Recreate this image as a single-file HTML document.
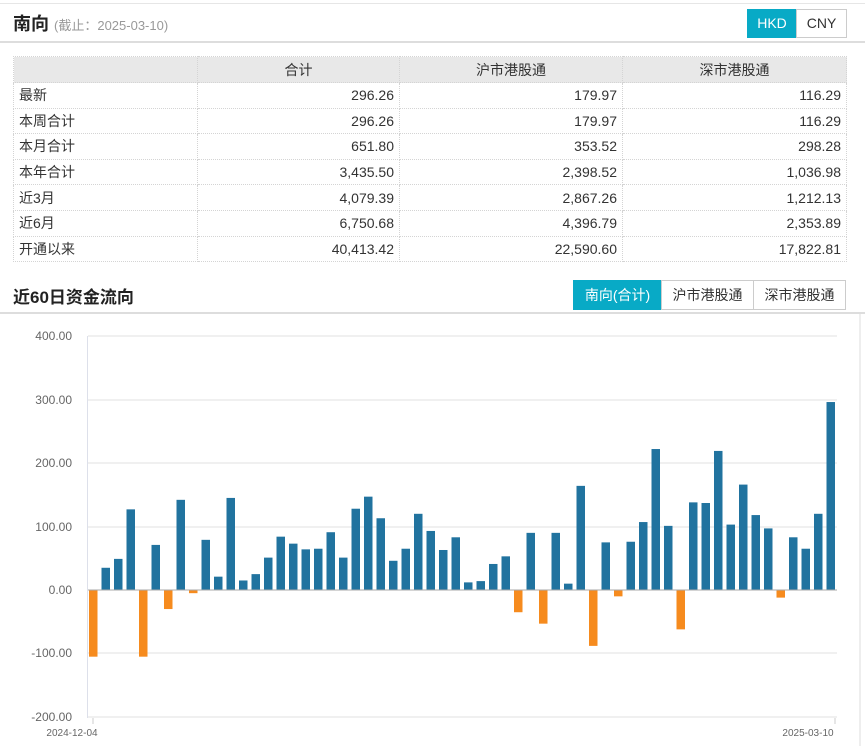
<!DOCTYPE html>
<html><head><meta charset="utf-8"><style>
*{margin:0;padding:0;box-sizing:border-box}
body{width:865px;height:746px;background:#fff;font-family:"Liberation Sans","Noto Sans CJK SC",sans-serif;color:#333;position:relative;overflow:hidden}
.abs{position:absolute}
table{border-collapse:collapse;position:absolute;left:13px;top:56px;width:834px;font-size:14px}
td,th{border:1px dotted #d4d4d4;height:25.6px;padding:0 5px}
th{background:#e8e8e8;font-weight:normal;height:26px;color:#333}
td{text-align:right}
td:first-child{text-align:left}
.btn{position:absolute;border:1px solid #ccc;font-size:14px;text-align:center;color:#333;background:#fff}
.on{background:#08aac6;color:#fff;border-color:#08aac6}
</style></head><body>
<div class="abs" style="left:0;top:3px;width:865px;height:1px;background:#e6e6e6"></div>
<div class="abs" style="left:13px;top:10px;font-size:18px;font-weight:bold;color:#222">南向 <span style="font-size:13px;font-weight:normal;color:#999">(截止：2025-03-10)</span></div>
<div class="btn on" style="left:747px;top:9px;width:50px;height:29px;line-height:27px">HKD</div>
<div class="btn" style="left:796px;top:9px;width:51px;height:29px;line-height:27px">CNY</div>
<div class="abs" style="left:0;top:41px;width:865px;height:2px;background:#ddd"></div>
<table>
<tr><th style="width:184px"></th><th style="width:202px">合计</th><th style="width:223px">沪市港股通</th><th>深市港股通</th></tr>
<tr><td>最新</td><td>296.26</td><td>179.97</td><td>116.29</td></tr>
<tr><td>本周合计</td><td>296.26</td><td>179.97</td><td>116.29</td></tr>
<tr><td>本月合计</td><td>651.80</td><td>353.52</td><td>298.28</td></tr>
<tr><td>本年合计</td><td>3,435.50</td><td>2,398.52</td><td>1,036.98</td></tr>
<tr><td>近3月</td><td>4,079.39</td><td>2,867.26</td><td>1,212.13</td></tr>
<tr><td>近6月</td><td>6,750.68</td><td>4,396.79</td><td>2,353.89</td></tr>
<tr><td>开通以来</td><td>40,413.42</td><td>22,590.60</td><td>17,822.81</td></tr>
</table>
<div class="abs" style="left:13px;top:283px;font-size:17px;font-weight:bold;color:#222">近60日资金流向</div>
<div class="btn on" style="left:573px;top:280px;width:89px;height:30px;line-height:28px">南向(合计)</div>
<div class="btn" style="left:661px;top:280px;width:93px;height:30px;line-height:28px">沪市港股通</div>
<div class="btn" style="left:753px;top:280px;width:93px;height:30px;line-height:28px">深市港股通</div>
<div class="abs" style="left:0;top:312px;width:865px;height:2px;background:#ddd"></div>
<div class="abs" style="left:859px;top:314px;width:2px;height:432px;background:#eee"></div>
<svg class="abs" style="left:0;top:0" width="865" height="746" font-family="Liberation Sans,sans-serif" font-size="12" fill="#666">
<g stroke="#ebebeb" stroke-width="1.5">
<line x1="88" y1="336" x2="837" y2="336"/><line x1="88" y1="400" x2="837" y2="400"/><line x1="88" y1="463" x2="837" y2="463"/><line x1="88" y1="527" x2="837" y2="527"/><line x1="88" y1="653" x2="837" y2="653"/><line x1="88" y1="717" x2="837" y2="717"/>
</g>
<line x1="87.5" y1="336" x2="87.5" y2="718" stroke="#dde0ea"/>
<g text-anchor="end">
<text x="72" y="340">400.00</text><text x="72" y="404">300.00</text><text x="72" y="467">200.00</text><text x="72" y="531">100.00</text><text x="72" y="594">0.00</text><text x="72" y="657">-100.00</text><text x="72" y="721">-200.00</text>
</g>
<line x1="93" y1="718" x2="93" y2="724" stroke="#ccc"/><line x1="835" y1="718" x2="835" y2="724" stroke="#ccc"/>
<text x="72" y="736" text-anchor="middle" font-size="10">2024-12-04</text>
<text x="808" y="736" text-anchor="middle" font-size="10">2025-03-10</text>
<g transform="translate(0,590) scale(1,-0.635)">
<g fill="#f68b1e">
<rect x="89" y="-105" width="8.5" height="105"/><rect x="139" y="-105" width="8.5" height="105"/><rect x="164" y="-30" width="8.5" height="30"/><rect x="189" y="-5" width="8.5" height="5"/><rect x="514" y="-35" width="8.5" height="35"/><rect x="539" y="-53" width="8.5" height="53"/><rect x="589" y="-88" width="8.5" height="88"/><rect x="614" y="-10" width="8.5" height="10"/><rect x="676.5" y="-62" width="8.5" height="62"/><rect x="776.5" y="-12" width="8.5" height="12"/>
</g>
<g fill="#21739f">
<rect x="101.5" y="0" width="8.5" height="35"/><rect x="114" y="0" width="8.5" height="49"/><rect x="126.5" y="0" width="8.5" height="127"/><rect x="151.5" y="0" width="8.5" height="71"/><rect x="176.5" y="0" width="8.5" height="142"/><rect x="201.5" y="0" width="8.5" height="79"/><rect x="214" y="0" width="8.5" height="21"/><rect x="226.5" y="0" width="8.5" height="145"/><rect x="239" y="0" width="8.5" height="15"/><rect x="251.5" y="0" width="8.5" height="25"/><rect x="264" y="0" width="8.5" height="51"/><rect x="276.5" y="0" width="8.5" height="84"/><rect x="289" y="0" width="8.5" height="73"/><rect x="301.5" y="0" width="8.5" height="64"/><rect x="314" y="0" width="8.5" height="65"/><rect x="326.5" y="0" width="8.5" height="91"/><rect x="339" y="0" width="8.5" height="51"/><rect x="351.5" y="0" width="8.5" height="128"/><rect x="364" y="0" width="8.5" height="147"/><rect x="376.5" y="0" width="8.5" height="113"/><rect x="389" y="0" width="8.5" height="46"/><rect x="401.5" y="0" width="8.5" height="65"/><rect x="414" y="0" width="8.5" height="120"/><rect x="426.5" y="0" width="8.5" height="93"/><rect x="439" y="0" width="8.5" height="63"/><rect x="451.5" y="0" width="8.5" height="83"/><rect x="464" y="0" width="8.5" height="12"/><rect x="476.5" y="0" width="8.5" height="14"/><rect x="489" y="0" width="8.5" height="41"/><rect x="501.5" y="0" width="8.5" height="53"/><rect x="526.5" y="0" width="8.5" height="90"/><rect x="551.5" y="0" width="8.5" height="90"/><rect x="564" y="0" width="8.5" height="10"/><rect x="576.5" y="0" width="8.5" height="164"/><rect x="601.5" y="0" width="8.5" height="75"/><rect x="626.5" y="0" width="8.5" height="76"/><rect x="639" y="0" width="8.5" height="107"/><rect x="651.5" y="0" width="8.5" height="222"/><rect x="664" y="0" width="8.5" height="101"/><rect x="689" y="0" width="8.5" height="138"/><rect x="701.5" y="0" width="8.5" height="137"/><rect x="714" y="0" width="8.5" height="219"/><rect x="726.5" y="0" width="8.5" height="103"/><rect x="739" y="0" width="8.5" height="166"/><rect x="751.5" y="0" width="8.5" height="118"/><rect x="764" y="0" width="8.5" height="97"/><rect x="789" y="0" width="8.5" height="83"/><rect x="801.5" y="0" width="8.5" height="65"/><rect x="814" y="0" width="8.5" height="120"/><rect x="826.5" y="0" width="8.5" height="296"/>
</g>
</g>
<line x1="88" y1="590" x2="837" y2="590" stroke="#aaa"/>
</svg>
</body></html>
